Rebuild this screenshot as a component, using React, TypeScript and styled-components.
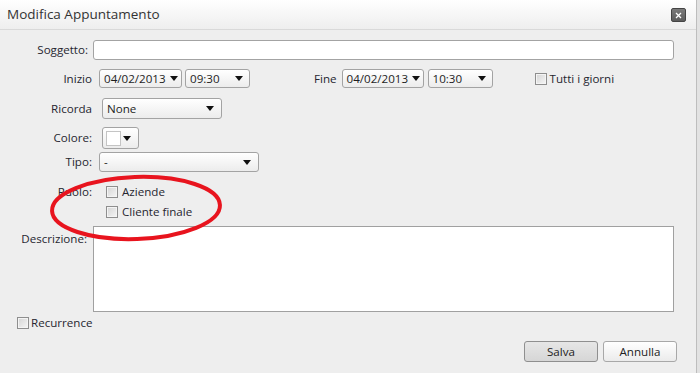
import * as React from "react";
import styled, { createGlobalStyle } from "styled-components";

const GlobalStyle = createGlobalStyle`
  html, body {
    margin: 0;
    padding: 0;
    background: #e2e2e2;
  }
  body {
    font-family: "Open Sans", "Liberation Sans", sans-serif;
    font-size: 11.6px;
    line-height: 16px;
    color: #262630;
  }
`;

const Dialog = styled.div`
  position: relative;
  width: 697px;
  height: 373px;
  background: #eeeeee;
  border-right: 1px solid #bdbdbd;
  box-sizing: border-box;
  overflow: hidden;
`;

const TitleBar = styled.div`
  height: 29px;
  display: flex;
  align-items: center;
  justify-content: space-between;
  padding: 0 10px 0 7px;
  background: linear-gradient(#ffffff, #eeeeee);
  border-bottom: 1px solid #d9d9d9;
`;

const Title = styled.span`
  font-size: 13.5px;
  color: #333;
  margin-top: -1px;
`;

const CloseButton = styled.div`
  width: 13px;
  height: 12px;
  margin-top: 1px;
  border-radius: 2px;
  background: linear-gradient(#7a7a7a, #5c5c5c);
  border: 1px solid #444;
  display: flex;
  align-items: center;
  justify-content: center;
`;

const Form = styled.div`
  display: flex;
  flex-direction: column;
  padding-top: 10px;
`;

const Row = styled.div<{ $mt?: number; $h: number; $align?: string }>`
  display: flex;
  height: ${p => p.$h}px;
  align-items: ${p => p.$align || "center"};
  margin-top: ${p => p.$mt || 0}px;
`;

const Label = styled.span<{ $w: number; $gap: number; $top?: number }>`
  width: ${p => p.$w}px;
  margin-right: ${p => p.$gap}px;
  margin-top: ${p => p.$top || 0}px;
  text-align: right;
  white-space: nowrap;
  flex-shrink: 0;
`;

const Spacer = styled.span<{ $w: number }>`
  width: ${p => p.$w}px;
  flex-shrink: 0;
`;

const TextInput = styled.div<{ $w: number; $h: number }>`
  width: ${p => p.$w}px;
  height: ${p => p.$h}px;
  box-sizing: border-box;
  background: #fff;
  border: 1px solid #a3a3a3;
  border-radius: 3px;
`;

const TextArea = styled.div`
  width: 581px;
  height: 86px;
  box-sizing: border-box;
  background: #fff;
  border: 1px solid #a0a0a0;
`;

const SelectBox = styled.div<{ $w: number; $h: number; $pr: number }>`
  width: ${p => p.$w}px;
  height: ${p => p.$h}px;
  box-sizing: border-box;
  display: flex;
  align-items: center;
  justify-content: space-between;
  padding: 0 ${p => p.$pr}px 0 4px;
  background: linear-gradient(#ffffff, #ececec);
  border: 1px solid #a3a3a3;
  border-radius: 3px;
  color: #1e1e1e;
  white-space: nowrap;
  flex-shrink: 0;
`;

const Arrow = styled.span`
  width: 0;
  height: 0;
  flex-shrink: 0;
  border-left: 4px solid transparent;
  border-right: 4px solid transparent;
  border-top: 5px solid #111;
`;

const ColorPicker = styled.div`
  width: 37px;
  height: 22px;
  box-sizing: border-box;
  display: flex;
  align-items: center;
  padding: 0 7px 0 3px;
  justify-content: space-between;
  background: linear-gradient(#ffffff, #ececec);
  border: 1px solid #a3a3a3;
  border-radius: 3px;
`;

const Swatch = styled.div`
  width: 15px;
  height: 15px;
  box-sizing: border-box;
  background: #fff;
  border: 1px solid #c4c4c4;
`;

const Check = styled.span`
  width: 12px;
  height: 12px;
  box-sizing: border-box;
  border: 1px solid #8e8e8e;
  background: linear-gradient(135deg, #d4d4d4, #f6f6f6);
  box-shadow: inset 0 0 0 1px #f4f4f4;
  flex-shrink: 0;
`;

const CheckRow = styled.label<{ $gap?: number }>`
  display: flex;
  align-items: center;
  height: 12px;
  gap: ${p => p.$gap ?? 4}px;
  white-space: nowrap;
`;

const CheckList = styled.div`
  display: flex;
  flex-direction: column;
  gap: 8px;
`;

const Footer = styled.div`
  display: flex;
  justify-content: flex-end;
  gap: 5px;
  margin-top: 12px;
  padding-right: 19px;
`;

const Button = styled.div<{ $pressed?: boolean }>`
  width: 74px;
  height: 21px;
  box-sizing: border-box;
  display: flex;
  align-items: center;
  justify-content: center;
  border: 1px solid ${p => (p.$pressed ? "#8f8f8f" : "#a8a8a8")};
  border-radius: 3px;
  background: ${p =>
    p.$pressed
      ? "linear-gradient(#e6e6e6, #d6d6d6)"
      : "linear-gradient(#ffffff, #ebebeb)"};
  color: #222;
`;

const Annotation = styled.svg`
  position: absolute;
  left: 46px;
  top: 172px;
  pointer-events: none;
`;

const Select: React.FC<{ w: number; h?: number; pr?: number; value: string }> = ({
  w,
  h = 19,
  pr = 7,
  value,
}) => (
  <SelectBox $w={w} $h={h} $pr={pr}>
    <span>{value}</span>
    <Arrow />
  </SelectBox>
);

export default function App() {
  return (
    <>
      <GlobalStyle />
      <Dialog>
        <TitleBar>
          <Title>Modifica Appuntamento</Title>
          <CloseButton>
            <svg width="7" height="7" viewBox="0 0 7 7">
              <path d="M1 1L6 6M6 1L1 6" stroke="#fff" strokeWidth="1.3" />
            </svg>
          </CloseButton>
        </TitleBar>
        <Form>
          <Row $h={20}>
            <Label $w={88} $gap={5}>Soggetto:</Label>
            <TextInput $w={581} $h={20} />
          </Row>
          <Row $mt={9} $h={19}>
            <Label $w={92} $gap={7}>Inizio</Label>
            <Select w={83} pr={3} value="04/02/2013" />
            <Spacer $w={3} />
            <Select w={65} pr={6} value="09:30" />
            <Spacer $w={64} />
            <span>Fine</span>
            <Spacer $w={5} />
            <Select w={82} pr={3} value="04/02/2013" />
            <Spacer $w={4} />
            <Select w={65} pr={6} value="10:30" />
            <Spacer $w={42} />
            <CheckRow $gap={3}>
              <Check />
              <span>Tutti i giorni</span>
            </CheckRow>
          </Row>
          <Row $mt={10} $h={21}>
            <Label $w={92} $gap={10}>Ricorda</Label>
            <Select w={120} h={21} value="None" />
          </Row>
          <Row $mt={8} $h={22}>
            <Label $w={92} $gap={10}>Colore:</Label>
            <ColorPicker>
              <Swatch />
              <Arrow />
            </ColorPicker>
          </Row>
          <Row $mt={3} $h={20}>
            <Label $w={92} $gap={7}>Tipo:</Label>
            <Select w={160} h={20} value="-" />
          </Row>
          <Row $mt={14} $h={32} $align="flex-start">
            <Label $w={92} $gap={14} $top={-2}>Ruolo:</Label>
            <CheckList>
              <CheckRow>
                <Check />
                <span>Aziende</span>
              </CheckRow>
              <CheckRow>
                <Check />
                <span>Cliente finale</span>
              </CheckRow>
            </CheckList>
          </Row>
          <Row $mt={8} $h={86} $align="flex-start">
            <Label $w={87} $gap={6} $top={5}>Descrizione:</Label>
            <TextArea />
          </Row>
          <Row $mt={5} $h={12}>
            <Spacer $w={17} />
            <CheckRow $gap={2}>
              <Check />
              <span>Recurrence</span>
            </CheckRow>
          </Row>
          <Footer>
            <Button $pressed>Salva</Button>
            <Button>Annulla</Button>
          </Footer>
        </Form>
        <Annotation width="180" height="72" viewBox="0 0 180 72">
          <ellipse
            cx="90"
            cy="36"
            rx="84"
            ry="31"
            fill="none"
            stroke="#e8141e"
            strokeWidth="4"
            transform="rotate(-2 90 36)"
          />
        </Annotation>
      </Dialog>
    </>
  );
}
